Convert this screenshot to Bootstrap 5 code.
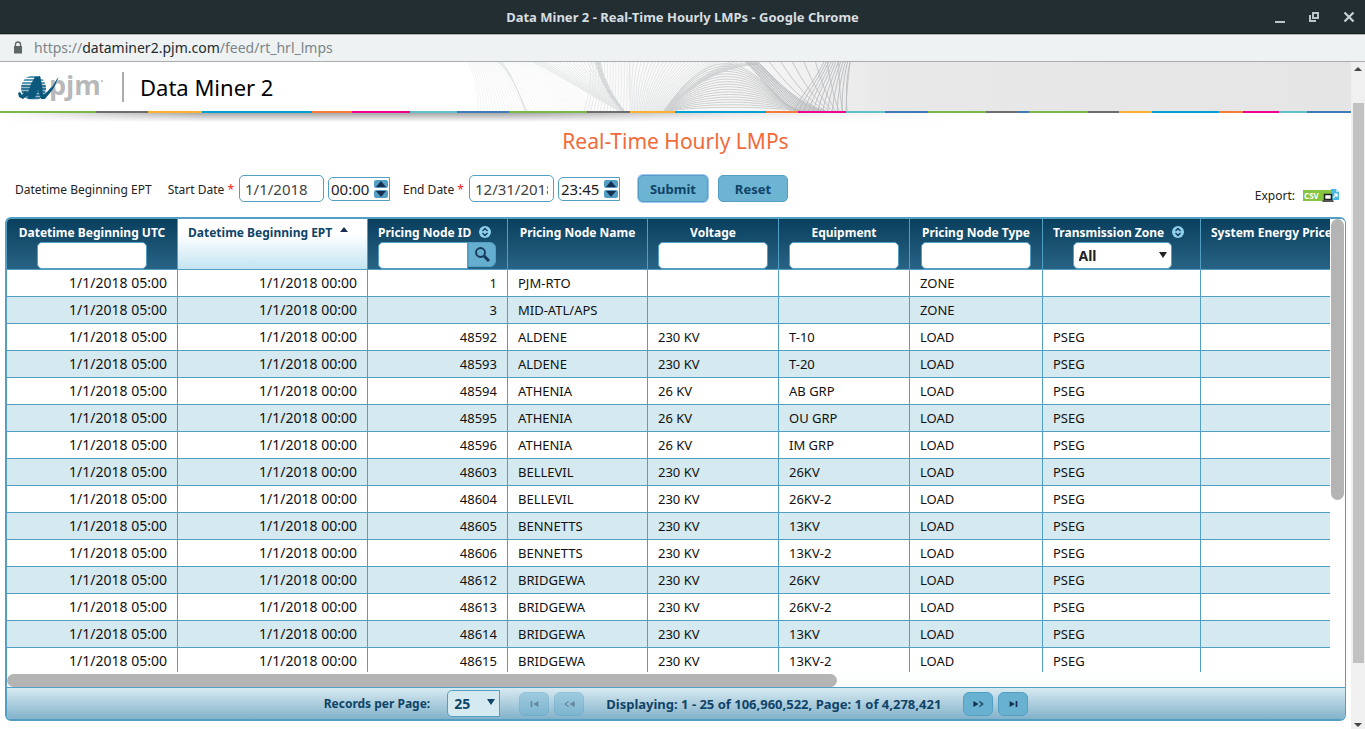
<!DOCTYPE html>
<html lang="en">
<head>
<meta charset="utf-8">
<meta name="viewport" content="width=device-width, initial-scale=1">
<title>Data Miner 2 - Real-Time Hourly LMPs</title>
<link href="https://cdn.jsdelivr.net/npm/bootstrap@5.3.0/dist/css/bootstrap.min.css" rel="stylesheet">
<style>
:root{--line:#539fc4;--navy:#0f4468;--btn:#69b3d3}
body{font-family:"Noto Sans",sans-serif;font-size:12px;line-height:18px;color:#222}
.win-title{background:#232e33;color:#d6dee1;height:34px;font-size:13px;border-bottom:1px solid #1a1f22;padding:0 10px}
.win-title svg{display:block}
.win-btn{background:none;border:0;padding:0}
.url-bar{background:#eef2f3;height:28px;font-size:14px;color:#7c8588;border-top:1px solid #b5b5b5;border-bottom:1px solid #a9adad;padding-left:13px}
.url-bar svg{margin-right:11px}
.url-bar a{color:inherit}
.url-bar b{font-weight:400;color:#222b2e}
.site-head{height:49px;background:linear-gradient(90deg,#fff 40%,#f4f4f4 57%,#e8e8e9 66%,#e5e5e5 100%)}
.brand{width:468px;padding-left:18px}
.brand-name{font-size:22px;line-height:30px;color:#000;border-left:2px solid #a9abad;padding-left:16px;margin-left:18px}
.stripe i{height:2px}
.stripe-shadow{height:9px;background:linear-gradient(90deg,transparent,#a8a8a8 15%,#a8a8a8 38%,#e8e8e8 55%,#fff 72%);-webkit-mask-image:linear-gradient(#000,transparent)}
h1{font-size:21px;line-height:30px;color:#f26a3a;margin:4px 0 9px;font-weight:400}
.filter-bar{height:52px;padding:10px 12px 0 15px}
.filter-bar sup{color:#f22;font-size:12px;top:0;line-height:18px}
.cap{padding-top:6px;margin-right:5px}
.cap-lead{margin-right:16px}
.cap-end{margin-left:13px}
.field{border:1px solid var(--line);border-radius:5px;background:#fff;color:#444;font-size:15px;line-height:18px}
.date-box{width:85px;height:27px;padding:0 5px;margin-right:4px}
.time-wrap{border:1px solid var(--line);border-radius:5px 0 0 5px;height:24px;width:62px;background:#fff;margin-top:2px}
.time-wrap input{border:0;width:45px;padding:0 0 0 2px;font-size:15px;background:none;color:#222}
.spin button{display:flex;align-items:center;justify-content:center;width:14px;height:8px;border:0;padding:0;border-radius:2px;background:var(--line);margin-bottom:2px}
.spin{padding-top:2px}
.act{height:27px;width:70px;border:1px solid var(--line);border-radius:5px;background:#6db3d2;color:var(--navy);font-size:13px;font-weight:700;line-height:18px;padding:0;margin-left:10px}
.act-focus{box-shadow:0 0 0 1px #a3c4f8;margin-left:18px}
.gridbox{margin:0 5px 8px;border:solid var(--line);border-width:2px 1px 2px 2px;border-radius:6px;overflow:hidden}
.grid-view{height:0;min-height:100%;overflow:hidden}
.grid-view table{table-layout:fixed;width:1400px;margin:0;border-collapse:separate;border-spacing:0}
.grid-view th{height:51px;padding:5px 9px 0;vertical-align:top;color:#fff;background:linear-gradient(#0a3f5e,#286385);border-right:1px solid var(--line);border-bottom:1px solid var(--line);white-space:nowrap;text-align:center;font-weight:700}
.grid-view th.sorted{background:linear-gradient(#fff 30%,#c3e4f2);color:var(--navy);text-align:left;padding-left:10px}
.grid-view th.start{text-align:left;padding-left:10px}
.mark-icon{vertical-align:-1px;margin-left:5px}
.grid-view td{height:27px;padding:0 10px;border-right:1px solid var(--line);border-bottom:1px solid var(--line);font-size:13px;line-height:18px;color:#111;white-space:nowrap}
.grid-view tr:nth-child(even) td{background:#d5e9f0}
.grid-view td.when{font-size:14px;text-align:right}
.grid-view td.num{text-align:right}
.col-filter{display:block;width:110px;height:27px;margin:0 auto;border:1px solid var(--line);border-radius:5px;background:#fff}
.id-filter .col-filter{width:90px;border-radius:5px 0 0 5px;margin:0}
.id-filter button{width:28px;height:25px;border:1px solid var(--line);border-radius:0 6px 6px 0;background:#65aed0;padding:0}
select{appearance:none;font-weight:700}
.pick{position:relative}
.pick::after{content:"";position:absolute;right:5px;top:10px;border:solid transparent;border-width:6px 4px 0;border-top-color:#222}
.zone-pick{width:99px;margin:0 auto}
.zone-pick select{width:99px;font-size:14px;color:#222;padding:0 5px}
.thumb{background:#b4b4b4;border-radius:7px}
.v-rail{width:15px;background:#fff}
.v-rail .thumb{width:13px;height:62%;margin-left:1px}
.h-rail{height:15px;padding-top:2px;background:#fdfefe}
.h-rail .thumb{width:62%;height:13px}
.pager{height:32px;border-top:1px solid var(--line);background:linear-gradient(#d8eaf1,#82b2ca);color:var(--navy);font-weight:700;font-size:12px}
.pager-info{font-size:13px;margin:0 22px}
.size-pick{margin:0 19px 0 17px}
.size-pick select{display:block;width:53px;height:27px;border:1px solid var(--line);border-radius:5px 0 0 5px;background:#d5e9f0;color:var(--navy);font-size:14px;padding:0 6px}
.size-pick::after{border-top-color:var(--navy);top:9px}
.pg{width:30px;height:24px;border:1px solid var(--line);border-radius:6px;background:#69b1d1;padding:0}
.pg+.pg{margin-left:5px}
.pg svg,.icon{display:block;margin:auto}
.pg:disabled{opacity:.45}
.win-scroll{width:14px;background:#f0f0f0}
.win-scroll .bar{width:11px;background:#c1c1c1;margin:31px 0 0 2px;flex:0 0 84%}
</style>
</head>
<body class="vh-100 d-flex flex-column overflow-hidden">
<header class="win-title d-flex align-items-center flex-shrink-0">
  <div class="col-2"></div>
  <strong class="flex-grow-1 text-center">Data Miner 2 - Real-Time Hourly LMPs - Google Chrome</strong>
  <div class="col-2 d-flex justify-content-end gap-4">
    <button class="win-btn" aria-label="Minimize"><svg width="10" height="12"><path d="M0 10h10v2H0z" fill="#b9c6ca"/></svg></button>
    <button class="win-btn" aria-label="Restore"><svg width="10" height="10"><path d="M0 3h2v5h5v2H0zM3 0h7v7H3zm2 2v3h3V2z" fill="#b9c6ca" fill-rule="evenodd"/></svg></button>
    <button class="win-btn" aria-label="Close"><svg width="12" height="12"><path d="M1.500 1.500l9 9m0-9l-9 9" stroke="#c8d3d6" stroke-width="2.200"/></svg></button>
  </div>
</header>
<div class="url-bar d-flex align-items-center flex-shrink-0">
  <svg width="10" height="14" viewBox="0 0 10 14"><path d="M1 5h8v7.500H1z" fill="#5f6668"/><path d="M2.500 6V3.500a2.500 2.500 0 015 0V6" fill="none" stroke="#5f6668" stroke-width="1.300"/></svg>
  <a href="#" class="text-decoration-none">https://<b>dataminer2.pjm.com</b>/feed/rt_hrl_lmps</a>
</div>
<div class="d-flex flex-grow-1 overflow-hidden">
<main class="flex-grow-1 d-flex flex-column overflow-hidden">
  <div class="site-head d-flex flex-shrink-0">
    <div class="brand d-flex align-items-center flex-shrink-0">
      <svg class="overflow-visible" width="86" height="38" viewBox="0 0 86 38" role="img" aria-label="pjm">
        <defs><clipPath id="ball"><circle cx="15.500" cy="20" r="12.500"/></clipPath></defs>
        <g clip-path="url(#ball)"><path d="M2 9h28M2 12h28M2 15h28" stroke="#5f9ab3" stroke-width="2"/><path d="M2 18h28M2 21h28M2 24h28M2 27h28M2 30h28" stroke="#2f7595" stroke-width="2.400"/></g>
        <path d="M0 25l2-1 2 3 3-4 3 2 3-9 4-7 5-1 2 9 1 10 5-4 11-14-7 13-7 9h-4l-3-9-3 8-5 1-3-3-4 3-4-2z" fill="#0c587c"/>
        <text x="31" y="27" font-family="Open Sans, sans-serif" font-weight="700" font-size="27" fill="#b6b8ba">pjm</text>
        <path d="M29 25q6-6 11-16-3 12-11 19z" fill="#0c587c"/>
        <circle cx="84" cy="13" r="1" fill="#b6b8ba"/>
      </svg>
      <div class="brand-name">Data Miner 2</div>
    </div>
    <svg id="waves" class="flex-shrink-0" width="386" height="49" aria-hidden="true"></svg>
  </div>
  <div class="stripe d-flex flex-shrink-0" id="stripe"></div>
  <div class="stripe-shadow flex-shrink-0"></div>
  <h1 class="text-center">Real-Time Hourly LMPs</h1>
  <form class="filter-bar d-flex align-items-start flex-shrink-0" onsubmit="return false">
    <span class="cap cap-lead">Datetime Beginning EPT</span>
    <label class="cap" for="d1">Start Date <sup>*</sup></label>
    <input class="field date-box" id="d1" value="1/1/2018">
    <div class="time-wrap d-flex align-items-center"><input aria-label="Start time" value="00:00"><div class="spin"><button type="button" aria-label="Up"><svg width="10" height="6"><path d="M0 6l5-6 5 6z" fill="#17304f"/></svg></button><button type="button" aria-label="Down"><svg width="10" height="6"><path d="M0 0l5 6 5-6z" fill="#17304f"/></svg></button></div></div>
    <label class="cap cap-end" for="d2">End Date <sup>*</sup></label>
    <input class="field date-box" id="d2" value="12/31/2018">
    <div class="time-wrap d-flex align-items-center"><input aria-label="End time" value="23:45"><div class="spin"><button type="button" aria-label="Up"><svg width="10" height="6"><path d="M0 6l5-6 5 6z" fill="#17304f"/></svg></button><button type="button" aria-label="Down"><svg width="10" height="6"><path d="M0 0l5 6 5-6z" fill="#17304f"/></svg></button></div></div>
    <button class="act act-focus">Submit</button>
    <button class="act" type="reset">Reset</button>
    <div class="ms-auto d-flex align-items-center pt-2 mt-1"><span class="me-2">Export:</span>
      <a href="#" aria-label="Export CSV"><svg class="icon" width="36" height="16" viewBox="0 0 36 16"><path d="M0 2h28v11H0z" fill="#84c441"/><path d="M28 1h5l3 3v8h-8z" fill="#4ab8e2"/><path d="M33 1v3h3" fill="#b9e4f5"/><path d="M30 10l4-4m-3 0h3v3" fill="none" stroke="#fff" stroke-width="1.200"/><text x="1" y="11" font-family="Noto Sans, sans-serif" font-weight="700" font-size="8" fill="#fff">CSV</text><path d="M21.500 6.500h7v5h-7z" fill="#fff" stroke="#222" stroke-width="1.600"/><path d="M20 12h10l1 2H19z" fill="#555"/></svg></a>
    </div>
  </form>
  <section class="gridbox flex-grow-1 d-flex flex-column">
    <div class="d-flex flex-grow-1 overflow-hidden">
      <div class="flex-grow-1 overflow-hidden"><div class="grid-view">
        <table>
          <colgroup><col width="171"><col width="190"><col width="140"><col width="140"><col width="131"><col width="131"><col width="133"><col width="158"><col></colgroup>
          <thead><tr>
            <th>Datetime Beginning UTC<input class="col-filter" aria-label="Datetime Beginning UTC"></th>
            <th class="sorted">Datetime Beginning EPT <svg class="mark-icon" width="8" height="12"><path d="M0 6l4-5 4 5z" fill="#17304f"/></svg></th>
            <th class="start">Pricing Node ID <svg class="mark-icon" width="12" height="12"><use href="#sort"/></svg><div class="d-flex id-filter"><input class="col-filter" aria-label="Pricing Node ID"><button aria-label="Search"><svg class="icon" width="17" height="17"><circle cx="6.500" cy="6.500" r="4.500" fill="none" stroke="#16395a" stroke-width="1.800"/><path d="M10 10l5 5" stroke="#16395a" stroke-width="3"/></svg></button></div></th>
            <th>Pricing Node Name</th>
            <th>Voltage<input class="col-filter" aria-label="Voltage"></th>
            <th>Equipment<input class="col-filter" aria-label="Equipment"></th>
            <th>Pricing Node Type<input class="col-filter" aria-label="Pricing Node Type"></th>
            <th class="start">Transmission Zone <svg class="mark-icon" width="12" height="12"><use href="#sort"/></svg><div class="pick zone-pick"><select class="col-filter" aria-label="Transmission Zone"><option>All</option></select></div></th>
            <th class="start">System Energy Price</th>
          </tr></thead>
          <tbody id="rows"></tbody>
        </table>
      </div></div>
      <div class="v-rail flex-shrink-0"><div class="thumb"></div></div>
    </div>
    <div class="h-rail flex-shrink-0"><div class="thumb"></div></div>
    <div class="pager d-flex align-items-center justify-content-center flex-shrink-0">
      <label for="size">Records per Page:</label>
      <div class="pick size-pick"><select id="size"><option>25</option></select></div>
      <button class="pg" disabled aria-label="First page"><svg width="9" height="6" viewBox="0 0 9 7"><path d="M0 0h2v7H0zM9 0v7L3 3.500z" fill="#17304f"/></svg></button>
      <button class="pg" disabled aria-label="Previous page"><svg width="11" height="6" viewBox="0 0 12 7"><path d="M12 0v7L6 3.500z" fill="#17304f"/><path d="M5 .5L1 3.500l4 3" fill="none" stroke="#17304f" stroke-width="1.300"/></svg></button>
      <span class="pager-info">Displaying: 1 - 25 of 106,960,522, Page: 1 of 4,278,421</span>
      <button class="pg" aria-label="Next page"><svg width="11" height="6" viewBox="0 0 12 7"><path d="M0 0v7l6-3.500z" fill="#17304f"/><path d="M7 .5l4 3-4 3" fill="none" stroke="#17304f" stroke-width="1.300"/></svg></button>
      <button class="pg" aria-label="Last page"><svg width="9" height="6" viewBox="0 0 9 7"><path d="M7 0h2v7H7zM0 0v7l6-3.500z" fill="#17304f"/></svg></button>
    </div>
  </section>
</main>
<div class="win-scroll d-flex flex-column flex-shrink-0">
  <svg class="mt-1" width="14" height="6"><path d="M3 5l4-4 4 4z" fill="#444"/></svg>
  <div class="bar"></div>
  <svg class="mt-auto" width="14" height="6"><path d="M3 0l4 4 4-4z" fill="#444"/></svg>
</div>
</div>
<svg width="0" height="0" class="d-none"><symbol id="sort" viewBox="0 0 12 12"><circle cx="6" cy="6" r="6" fill="#8fd0ee"/><path d="M3.500 5L6 2.500 8.500 5M3.500 7L6 9.500 8.500 7" fill="none" stroke="#16395a" stroke-width="1.400"/></symbol></svg>
<script src="https://cdn.jsdelivr.net/npm/bootstrap@5.3.0/dist/js/bootstrap.bundle.min.js"></script>
<script>
// id, node name, voltage, equipment, type, zone
const nodes = [
  [1,'PJM-RTO','','','ZONE',''],[3,'MID-ATL/APS','','','ZONE',''],
  [48592,'ALDENE','230 KV','T-10','LOAD','PSEG'],[48593,'ALDENE','230 KV','T-20','LOAD','PSEG'],
  [48594,'ATHENIA','26 KV','AB GRP','LOAD','PSEG'],[48595,'ATHENIA','26 KV','OU GRP','LOAD','PSEG'],
  [48596,'ATHENIA','26 KV','IM GRP','LOAD','PSEG'],[48603,'BELLEVIL','230 KV','26KV','LOAD','PSEG'],
  [48604,'BELLEVIL','230 KV','26KV-2','LOAD','PSEG'],[48605,'BENNETTS','230 KV','13KV','LOAD','PSEG'],
  [48606,'BENNETTS','230 KV','13KV-2','LOAD','PSEG'],[48612,'BRIDGEWA','230 KV','26KV','LOAD','PSEG'],
  [48613,'BRIDGEWA','230 KV','26KV-2','LOAD','PSEG'],[48614,'BRIDGEWA','230 KV','13KV','LOAD','PSEG'],
  [48615,'BRIDGEWA','230 KV','13KV-2','LOAD','PSEG']
];
document.getElementById('rows').innerHTML = nodes.map(([id, ...rest]) =>
  `<tr><td class="when">1/1/2018 05:00</td><td class="when">1/1/2018 00:00</td><td class="num">${id}</td>${rest.map(v => `<td>${v}</td>`).join('')}<td></td></tr>`).join('');

// Colour segments under the header: colour, share of the width
const c = {g:'#7ab648',d:'#6d6e71',y:'#fbb034',b:'#00a0d2',o:'#f47b3a',p:'#ec008c',t:'#62c0c8',n:'#3f7cb5'};
const seg = [['g',96],['d',52],['y',54],['b',110],['o',40],['p',58],['t',47],['n',52],['g',78],['d',43],['y',45],['b',91],['o',32],['p',48],['t',39],['n',43],['g',58],['d',32],['n',11],['g',59],['d',31],['y',33],['b',67],['o',24],['p',36],['t',28],['n',44]];
document.getElementById('stripe').innerHTML = seg.map(([k, w]) => `<i style="flex:${w} 1 0;background:${c[k]}"></i>`).join('');

// Guilloche lines: each family blends between two cubic curves
const fams = [
  [[0,0,8,15,10,35,10,49],[30,0,45,14,52,35,60,49],16,'#f2f3f3'],
  [[28,0,40,12,48,28,56,49],[75,0,100,10,110,30,125,49],22,'#f3f4f4'],
  [[30,0,42,10,50,28,58,49],[34,0,44,12,50,30,58,49],3,'#e2e4e5'],
  [[66,0,100,18,130,38,152,49],[130,0,134,20,144,35,152,49],18,'#e4e6e7'],
  [[122,0,124,20,120,35,116,49],[162,0,162,20,162,35,162,49],14,'#e6e8e9'],
  [[128,0,132,20,142,35,154,49],[132,0,136,20,146,35,156,49],4,'#cfd2d4'],
  [[162,0,160,20,162,35,164,49],[250,0,225,15,208,30,196,49],24,'#e0e2e3'],
  [[196,49,240,-14,272,-14,322,49],[200,49,235,44,290,44,335,49],17,'#c9cbcc'],
  [[196,49,216,30,235,12,262,0],[200,49,225,20,255,5,290,2],7,'#d0d2d4'],
  [[290,0,310,20,330,42,358,49],[278,0,302,26,318,46,330,49],9,'#b6b9bb'],
  [[290,0,310,24,330,40,350,49],[382,0,380,20,378,35,378,49],8,'#c0c2c4'],
  [[382,0,378,18,378,34,379,49],[356,0,346,20,332,35,326,49],11,'#b8babc']
];
document.getElementById('waves').innerHTML = fams.map(([a, b, n, col]) => {
  let d = '';
  for (let i = 0; i <= n; i++) {
    const p = a.map((v, k) => (v + (b[k] - v) * i / n).toFixed(1));
    d += `M${p[0]} ${p[1]}C${p.slice(2).join(' ')}`;
  }
  return `<path d="${d}" fill="none" stroke="${col}" stroke-width=".9"/>`;
}).join('');
</script>
</body>
</html>
